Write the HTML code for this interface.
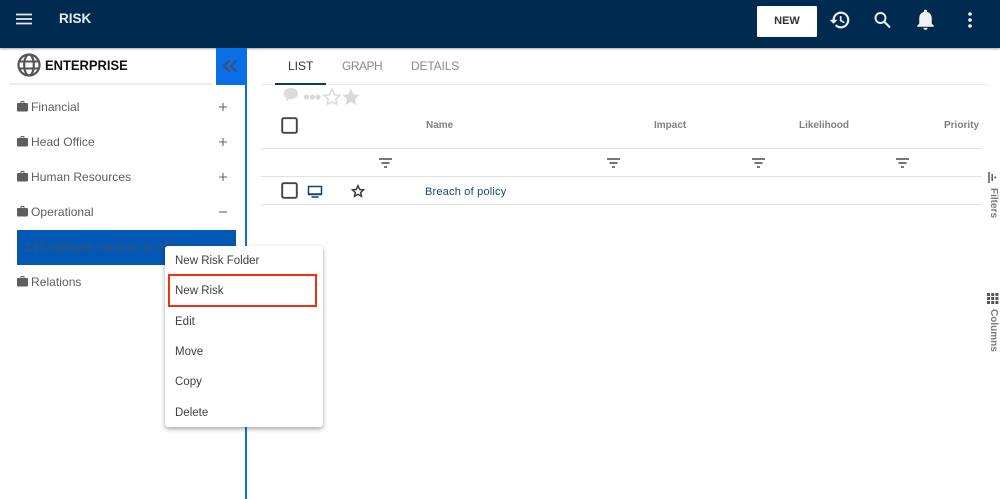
<!DOCTYPE html>
<html><head><meta charset="utf-8"><style>
html,body{margin:0;padding:0;background:#fff}
body{width:1000px;height:499px;position:relative;overflow:hidden;font-family:"Liberation Sans",sans-serif;color:#5c5c5c}
.a{position:absolute;white-space:nowrap}
svg{position:absolute;display:block}
.t{font-size:12px;line-height:14px;letter-spacing:.05px}
.th{font-size:10px;line-height:12px;font-weight:bold;color:#808080}
.ln{position:absolute;height:1px;background:#e2e2e2}
.m{font-size:11.5px;line-height:14px;color:#3e3e3e;left:175px}
.v{font-size:10px;line-height:12px;color:#7a7a7a;font-weight:bold;writing-mode:vertical-rl}
</style></head><body>
<div class="a" style="left:0;top:0;width:1000px;height:48px;background:#002a50;box-shadow:0 1px 2px rgba(0,0,0,.35)"></div>
<svg style="left:16px;top:13px" width="16" height="12"><path d="M0 1.500h16M0 6h16M0 10.500h16" stroke="#e8edf2" stroke-width="1.700"/></svg>
<div class="a" style="left:59px;top:11px;font-size:13.500px;line-height:16px;font-weight:bold;color:#e8edf2">RISK</div>
<div class="a" style="left:757px;top:6px;width:60px;height:31px;background:#fff;border-radius:1px;text-align:center;font-size:11px;line-height:30px;font-weight:bold;color:#333">NEW</div>
<svg style="left:829px;top:9px" width="22" height="22" viewBox="0 0 24 24"><path fill="#eef2f5" stroke="#eef2f5" stroke-width=".4" d="M13 3a9 9 0 0 0-9 9H1l3.900 3.900L9 12H6a7 7 0 1 1 2.050 4.950l-1.420 1.420A9 9 0 1 0 13 3zm-1 5v5l4.300 2.500.7-1.200-3.500-2.100V8z"/></svg>
<svg style="left:872px;top:10px" width="20" height="20" fill="none" stroke="#eef2f5"><circle cx="8.500" cy="8" r="5" stroke-width="1.900"/><path d="M12 11.500l6 6" stroke-width="2.100"/></svg>
<svg style="left:913px;top:7px" width="25" height="25" viewBox="0 0 24 24"><path fill="#eef2f5" d="M12 22a2 2 0 0 0 2-2h-4a2 2 0 0 0 2 2zm6-6v-5c0-3.100-1.600-5.600-4.500-6.300V4a1.500 1.500 0 0 0-3 0v.7C7.600 5.400 6 7.900 6 11v5l-2 2v1h16v-1l-2-2z"/></svg>
<svg style="left:968px;top:12px" width="4" height="16"><circle cx="2" cy="2" r="1.800" fill="#eef2f5"/><circle cx="2" cy="8" r="1.800" fill="#eef2f5"/><circle cx="2" cy="14" r="1.800" fill="#eef2f5"/></svg>

<svg style="left:17px;top:53px" width="24" height="24" viewBox="0 0 24 24" fill="none" stroke="#555" stroke-width="2.200"><circle cx="12" cy="12" r="10.500"/><ellipse cx="12" cy="12" rx="4.800" ry="10.500"/><path d="M2.500 8.500h19M2.500 15.500h19" stroke-width="2"/></svg>
<div class="a" style="left:45px;top:57px;font-size:14px;line-height:16px;font-weight:bold;color:#111;transform:scaleX(.925);transform-origin:0 0">ENTERPRISE</div>
<div class="ln" style="left:9px;top:83px;width:204px;height:2px;background:#ececec"></div>
<div class="a" style="left:216px;top:48px;width:31px;height:37px;background:#0a6fe6"></div>
<svg style="left:222px;top:59px" width="17" height="15" fill="none" stroke="#3f5065" stroke-width="2"><path d="M7.500 1.500L2 7l5.500 5.500M14.500 1.500L9 7l5.500 5.500"/></svg>
<div class="a" style="left:245px;top:85px;width:2px;height:414px;background:#0a6fe6"></div>

<svg style="left:17px;top:101px" width="11" height="11" viewBox="0 0 11 11"><path fill="#5e5e5e" d="M3.500 2V1a1 1 0 0 1 1-1h2a1 1 0 0 1 1 1v1H10a1 1 0 0 1 1 1v6.500a1 1 0 0 1-1 1H1a1 1 0 0 1-1-1V3a1 1 0 0 1 1-1zm1 0h2V1h-2z"/></svg>
<div class="a t" style="left:31px;top:100px">Financial</div>
<svg style="left:219px;top:103px" width="8" height="8"><path d="M0 4h8M4 0v8" stroke="#666" stroke-width="1.100"/></svg>
<svg style="left:17px;top:136px" width="11" height="11" viewBox="0 0 11 11"><path fill="#5e5e5e" d="M3.500 2V1a1 1 0 0 1 1-1h2a1 1 0 0 1 1 1v1H10a1 1 0 0 1 1 1v6.500a1 1 0 0 1-1 1H1a1 1 0 0 1-1-1V3a1 1 0 0 1 1-1zm1 0h2V1h-2z"/></svg>
<div class="a t" style="left:31px;top:135px">Head Office</div>
<svg style="left:219px;top:138px" width="8" height="8"><path d="M0 4h8M4 0v8" stroke="#666" stroke-width="1.100"/></svg>
<svg style="left:17px;top:171px" width="11" height="11" viewBox="0 0 11 11"><path fill="#5e5e5e" d="M3.500 2V1a1 1 0 0 1 1-1h2a1 1 0 0 1 1 1v1H10a1 1 0 0 1 1 1v6.500a1 1 0 0 1-1 1H1a1 1 0 0 1-1-1V3a1 1 0 0 1 1-1zm1 0h2V1h-2z"/></svg>
<div class="a t" style="left:31px;top:170px">Human Resources</div>
<svg style="left:219px;top:173px" width="8" height="8"><path d="M0 4h8M4 0v8" stroke="#666" stroke-width="1.100"/></svg>
<svg style="left:17px;top:206px" width="11" height="11" viewBox="0 0 11 11"><path fill="#5e5e5e" d="M3.500 2V1a1 1 0 0 1 1-1h2a1 1 0 0 1 1 1v1H10a1 1 0 0 1 1 1v6.500a1 1 0 0 1-1 1H1a1 1 0 0 1-1-1V3a1 1 0 0 1 1-1zm1 0h2V1h-2z"/></svg>
<div class="a t" style="left:31px;top:205px">Operational</div>
<svg style="left:219px;top:208px" width="8" height="8"><path d="M0 4h8" stroke="#666" stroke-width="1.100"/></svg>

<div class="a" style="left:17px;top:230px;width:219px;height:35px;background:#0358b5"></div>
<svg style="left:26px;top:242px" width="11" height="10" fill="none" stroke="#34527a"><path d="M.5 1.500h3.500l1 1h5.500v6.500H.5z"/></svg>
<div class="a t" style="left:40px;top:240px;color:#34527a">Employee conduct or ethics</div>

<svg style="left:17px;top:276px" width="11" height="11" viewBox="0 0 11 11"><path fill="#5e5e5e" d="M3.500 2V1a1 1 0 0 1 1-1h2a1 1 0 0 1 1 1v1H10a1 1 0 0 1 1 1v6.500a1 1 0 0 1-1 1H1a1 1 0 0 1-1-1V3a1 1 0 0 1 1-1zm1 0h2V1h-2z"/></svg>
<div class="a t" style="left:31px;top:275px">Relations</div>

<div class="a" style="left:288px;top:59px;font-size:12px;line-height:14px;color:#333">LIST</div>
<div class="a" style="left:342px;top:59px;font-size:12px;line-height:14px;letter-spacing:-.5px;color:#8a8a8a">GRAPH</div>
<div class="a" style="left:411px;top:59px;font-size:12px;line-height:14px;letter-spacing:-.15px;color:#8a8a8a">DETAILS</div>
<div class="ln" style="left:261px;top:84px;width:727px;background:#e8e8e8"></div>
<div class="a" style="left:275px;top:83px;width:51px;height:2px;background:#0b3a66"></div>

<svg style="left:283px;top:88px" width="16" height="15" viewBox="0 0 16 15"><path fill="#dcdcdc" d="M8 0c4 0 7 2.300 7 5.500S12 11 8 11H6.500L3 13.500l.5-3.500C1.500 9 .5 7.500.5 5.500.5 2.300 4 0 8 0z"/></svg>
<svg style="left:303px;top:94px" width="18" height="6"><circle cx="3.500" cy="3" r="2.600" fill="#d8d8d8"/><circle cx="9.500" cy="3" r="2.600" fill="#d8d8d8"/><circle cx="15" cy="3" r="2.600" fill="#d8d8d8"/></svg>
<svg style="left:322px;top:87px" width="20" height="20" viewBox="0 0 24 24"><path fill="none" stroke="#dcdcdc" stroke-width="1.800" d="M12 3l2.800 6.300 6.800.7-5.100 4.500 1.500 6.700L12 17.700l-6 3.500 1.500-6.700L2.400 10l6.800-.7z"/></svg>
<svg style="left:341px;top:87px" width="20" height="20" viewBox="0 0 24 24"><path fill="#d8d8d8" d="M12 2l3 6.800 7.300.7-5.500 4.900 1.600 7.200L12 17.800l-6.400 3.800 1.600-7.200L1.700 9.500 9 8.800z"/></svg>

<svg style="left:281px;top:117px" width="17" height="17"><rect x="1.200" y="1.200" width="14.600" height="14.600" rx="1.500" fill="none" stroke="#444" stroke-width="1.900"/></svg>
<div class="a th" style="left:426px;top:120px">Name</div>
<div class="a th" style="left:654px;top:120px">Impact</div>
<div class="a th" style="left:799px;top:120px">Likelihood</div>
<div class="a th" style="left:944px;top:120px">Priority</div>
<div class="ln" style="left:261px;top:148px;width:721px"></div>
<svg style="left:379px;top:158px" width="13" height="10"><path d="M0 1h13M2.500 5h8M5 9h3" stroke="#4a4a4a" stroke-width="1.500"/></svg>
<svg style="left:607px;top:158px" width="13" height="10"><path d="M0 1h13M2.500 5h8M5 9h3" stroke="#4a4a4a" stroke-width="1.500"/></svg>
<svg style="left:752px;top:158px" width="13" height="10"><path d="M0 1h13M2.500 5h8M5 9h3" stroke="#4a4a4a" stroke-width="1.500"/></svg>
<svg style="left:896px;top:158px" width="13" height="10"><path d="M0 1h13M2.500 5h8M5 9h3" stroke="#4a4a4a" stroke-width="1.500"/></svg>
<div class="ln" style="left:261px;top:176px;width:721px"></div>
<svg style="left:281px;top:182px" width="17" height="17"><rect x="1.200" y="1.200" width="14.600" height="14.600" rx="1.500" fill="none" stroke="#444" stroke-width="1.900"/></svg>
<svg style="left:307px;top:185px" width="16" height="13" viewBox="0 0 16 13"><path fill="none" stroke="#0f4673" stroke-width="1.500" d="M1.500 1.500h13v7.500h-13z"/><path d="M1 9.500h14M4.500 12h7" stroke="#0f4673" stroke-width="1.500"/></svg>
<svg style="left:351px;top:184px" width="14" height="14" viewBox="0 0 24 24"><path fill="none" stroke="#333" stroke-width="2.400" d="M12 3l2.800 6.300 6.800.7-5.100 4.500 1.500 6.700L12 17.700l-6 3.500 1.500-6.700L2.400 10l6.800-.7z"/></svg>
<div class="a" style="left:425px;top:185px;font-size:11px;line-height:14px;letter-spacing:.2px;color:#1a4673">Breach of policy</div>
<div class="ln" style="left:261px;top:204px;width:721px"></div>

<svg style="left:987px;top:172px" width="11" height="11"><path d="M2 0v11M5.200 2v7M8.200 4.500v2" stroke="#555" stroke-width="1.500"/></svg>
<div class="a v" style="left:987px;top:188px">Filters</div>
<svg style="left:987px;top:293px" width="12" height="11" fill="#555"><path d="M0 0h3v3H0zM4.200 0h3v3h-3zM8.400 0h3v3h-3zM0 4h3v3H0zM4.200 4h3v3h-3zM8.400 4h3v3h-3zM0 8h3v3H0zM4.200 8h3v3h-3zM8.400 8h3v3h-3z"/></svg>
<div class="a v" style="left:987px;top:309px">Columns</div>

<div class="a" style="left:165px;top:246px;width:158px;height:181px;background:#fff;border-radius:3px;box-shadow:0 2px 5px rgba(0,0,0,.35)"></div>
<div class="a m" style="top:254px">New Risk Folder</div>
<div class="a" style="left:168px;top:274px;width:145px;height:29px;border:2px solid #f2300f"></div>
<div class="a m" style="top:284px">New Risk</div>
<div class="a m" style="top:315px">Edit</div>
<div class="a m" style="top:345px">Move</div>
<div class="a m" style="top:375px">Copy</div>
<div class="a m" style="top:406px">Delete</div>
</body></html>
